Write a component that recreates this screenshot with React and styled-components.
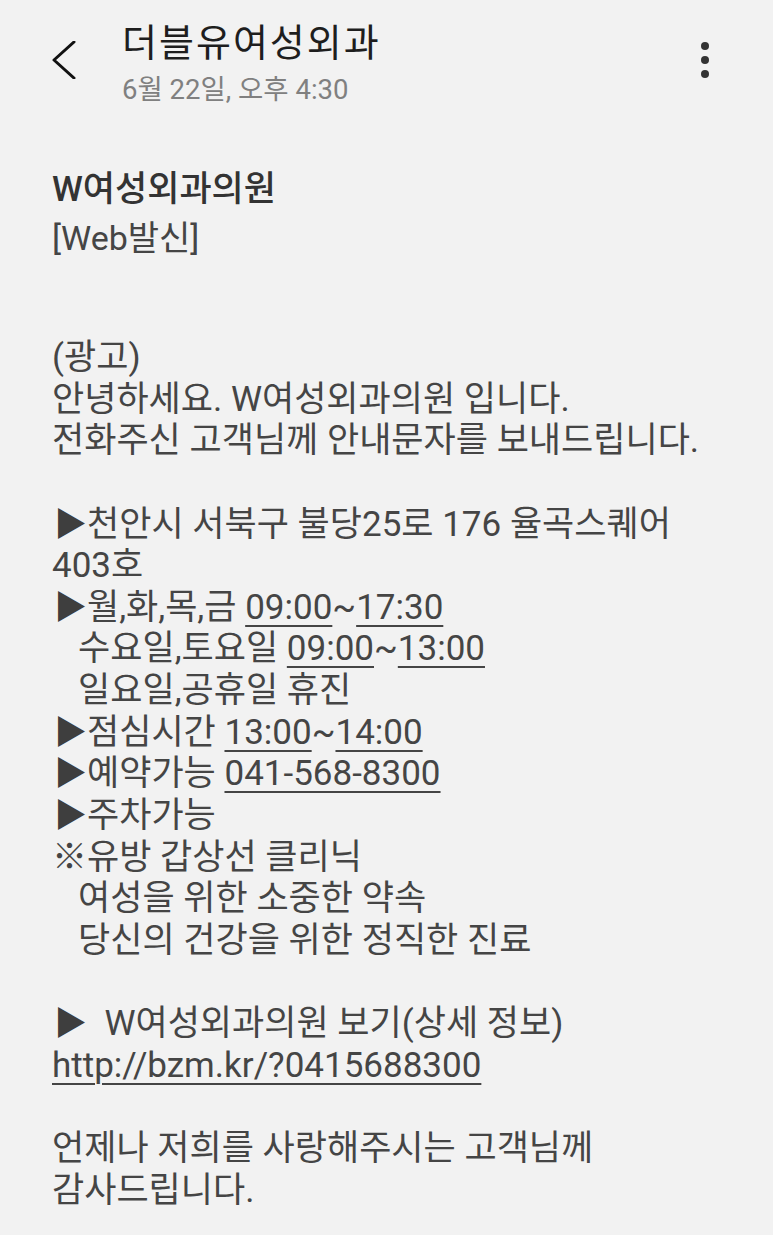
import React from "react";
import styled, { createGlobalStyle } from "styled-components";

const Global = createGlobalStyle`
  html, body { margin: 0; padding: 0; background: #f2f2f2; }
  body { font-family: Roboto, "Noto Sans CJK KR", sans-serif; }
`;

const Page = styled.div`
  width: 773px;
  min-height: 1235px;
  background: #f2f2f2;
  box-sizing: border-box;
  overflow: hidden;
`;

const Header = styled.header`
  display: flex;
  align-items: flex-start;
  padding: 16px 0 0 0;
`;

const BackButton = styled.button`
  border: 0;
  background: none;
  padding: 0;
  margin: 25px 0 0 52px;
  width: 24px;
  height: 38px;
  display: flex;
  align-items: center;
  justify-content: center;
  cursor: pointer;
`;

const TitleBlock = styled.div`
  display: flex;
  flex-direction: column;
  margin-left: 46px;
  flex: 1;
`;

const Title = styled.h1`
  margin: 0;
  font-family: "Noto Sans CJK KR", sans-serif;
  font-weight: 400;
  font-size: 38px;
  height: 48px;
  line-height: 48px;
  letter-spacing: 2px;
  color: #1e1e1e;
`;

const DateText = styled.div`
  font-family: Roboto, "Noto Sans CJK KR", sans-serif;
  font-size: 27.5px;
  height: 40px;
  line-height: 40px;
  margin-top: 6px;
  color: #808080;
`;

const MenuButton = styled.button`
  border: 0;
  background: none;
  padding: 0;
  margin: 24px 60px 0 0;
  width: 16px;
  height: 40px;
  display: flex;
  flex-direction: column;
  align-items: center;
  justify-content: center;
  gap: 6px;
`;

const Dot = styled.span`
  width: 8px;
  height: 8px;
  border-radius: 50%;
  background: #333;
`;

const Message = styled.main`
  padding: 0 0 0 52px;
  margin-top: 56px;
  color: #454545;
`;

const Sender = styled.div`
  font-family: Roboto, "Noto Sans CJK KR", sans-serif;
  font-weight: 500;
  font-size: 35px;
  height: 48px;
  line-height: 48px;
  color: #333;
`;

const Tag = styled.div`
  font-size: 34px;
  height: 48px;
  line-height: 48px;
  color: #454545;
`;

const Body = styled.div`
  margin-top: 75px;
  font-size: 35px;
  white-space: pre;
  color: #454545;
`;

const Line = styled.div`
  height: 41.65px;
  line-height: 41.65px;
`;

const U = styled.span`
  text-decoration: underline;
  text-decoration-thickness: 2px;
  text-underline-offset: 6px;
`;

const Tri = styled.span`
  display: inline-block;
  width: 33px;
  padding-left: 2px;
  font-family: "Noto Sans CJK KR", sans-serif;
  font-size: 33px;
  line-height: 30px;
  color: #3e3e3e;
`;

export default function App() {
  return (
    <Page>
      <Global />
      <Header>
        <BackButton aria-label="back">
          <svg width="24" height="38" viewBox="0 0 24 38">
            <path d="M22 1 L2 19 L22 37" fill="none" stroke="#111" strokeWidth="3" strokeLinecap="round" strokeLinejoin="round" />
          </svg>
        </BackButton>
        <TitleBlock>
          <Title>더블유여성외과</Title>
          <DateText>6월 22일, 오후 4:30</DateText>
        </TitleBlock>
        <MenuButton aria-label="more">
          <Dot />
          <Dot />
          <Dot />
        </MenuButton>
      </Header>
      <Message>
        <Sender>W여성외과의원</Sender>
        <Tag>[Web발신]</Tag>
        <Body>
          <Line>(광고)</Line>
          <Line>안녕하세요. W여성외과의원 입니다.</Line>
          <Line>전화주신 고객님께 안내문자를 보내드립니다.</Line>
          <Line />
          <Line><Tri>▶</Tri>천안시 서북구 불당25로 176 율곡스퀘어</Line>
          <Line>403호</Line>
          <Line><Tri>▶</Tri>월,화,목,금 <U>09:00</U>~<U>17:30</U></Line>
          <Line>{"   "}수요일,토요일 <U>09:00</U>~<U>13:00</U></Line>
          <Line>{"   "}일요일,공휴일 휴진</Line>
          <Line><Tri>▶</Tri>점심시간 <U>13:00</U>~<U>14:00</U></Line>
          <Line><Tri>▶</Tri>예약가능 <U>041-568-8300</U></Line>
          <Line><Tri>▶</Tri>주차가능</Line>
          <Line>※유방 갑상선 클리닉</Line>
          <Line>{"   "}여성을 위한 소중한 약속</Line>
          <Line>{"   "}당신의 건강을 위한 정직한 진료</Line>
          <Line />
          <Line><Tri>▶</Tri>{"  "}W여성외과의원 보기(상세 정보)</Line>
          <Line><U>http://bzm.kr/?0415688300</U></Line>
          <Line />
          <Line>언제나 저희를 사랑해주시는 고객님께</Line>
          <Line>감사드립니다.</Line>
        </Body>
      </Message>
    </Page>
  );
}
